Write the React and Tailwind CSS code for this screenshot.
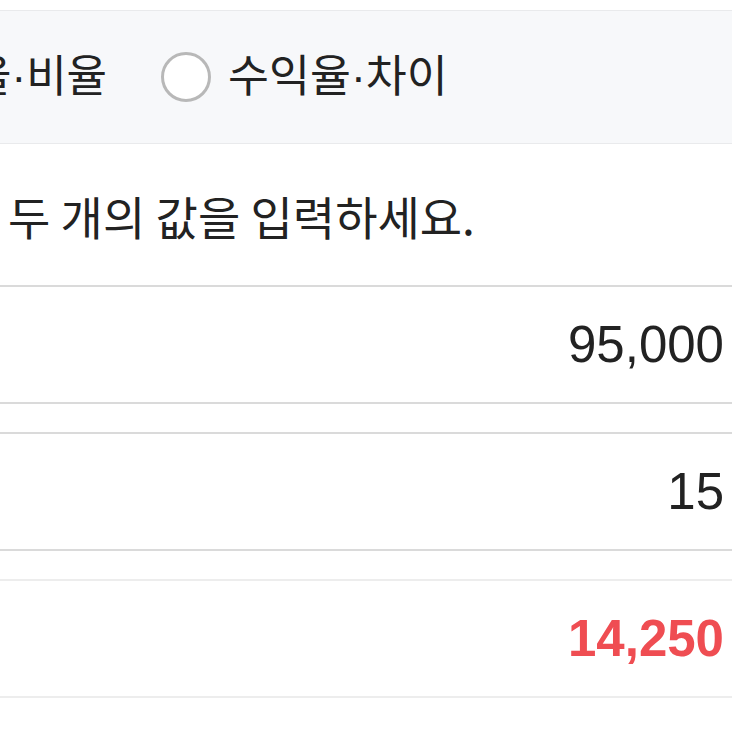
const rows = [
  { value: "95,000", result: false },
  { value: "15", result: false },
  { value: "14,250", result: true },
];

const Radio = () => (
  <span className="inline-block w-[50px] h-[50px] rounded-full border-[3px] border-[#b8b8b8] bg-white shrink-0"></span>
);

// narrow middle dot between the two words of a label
const Dot = () => (
  <span style={{ fontFamily: '"Liberation Sans", Arial, sans-serif' }}>·</span>
);

export default function App() {
  return (
    <div
      className="w-[732px] h-[732px] overflow-hidden bg-white text-[#222]"
      style={{ fontFamily: '"Noto Sans CJK KR", "Noto Sans", sans-serif' }}
    >
      <div className="h-[10px]"></div>

      {/* mode selector */}
      <div className="h-[134px] bg-[#f7f8fa] border-y border-[#e9eaec] flex items-center overflow-hidden">
        <div className="flex items-center ml-[-29px] mt-[-4px]">
          <span className="text-[44px] leading-none">
            율<Dot />비율
          </span>
          <span className="ml-[54px] flex items-center mt-[4px]">
            <Radio />
          </span>
          <span className="ml-[17px] text-[44.5px] leading-none">
            수익율<Dot />차이
          </span>
        </div>
      </div>

      {/* guide */}
      <div className="h-[141px] flex items-center pl-[8px]">
        <p className="text-[46px] leading-none">두 개의 값을 입력하세요.</p>
      </div>

      <div className="flex flex-col gap-[28px]">
        {rows.map((r) => (
          <div
            key={r.value}
            className={`h-[119px] flex items-center justify-end pr-[8px] border-y-2 ${
              r.result ? "border-[#ededed]" : "border-[#dadada]"
            }`}
          >
            <span
              className={`text-[51px] leading-none ${
                r.result ? "text-[#ef4d52] font-semibold" : "text-[#222]"
              }`}
              style={{ fontFamily: '"Liberation Sans", Arial, sans-serif' }}
            >
              {r.value}
            </span>
          </div>
        ))}
      </div>
    </div>
  );
}
